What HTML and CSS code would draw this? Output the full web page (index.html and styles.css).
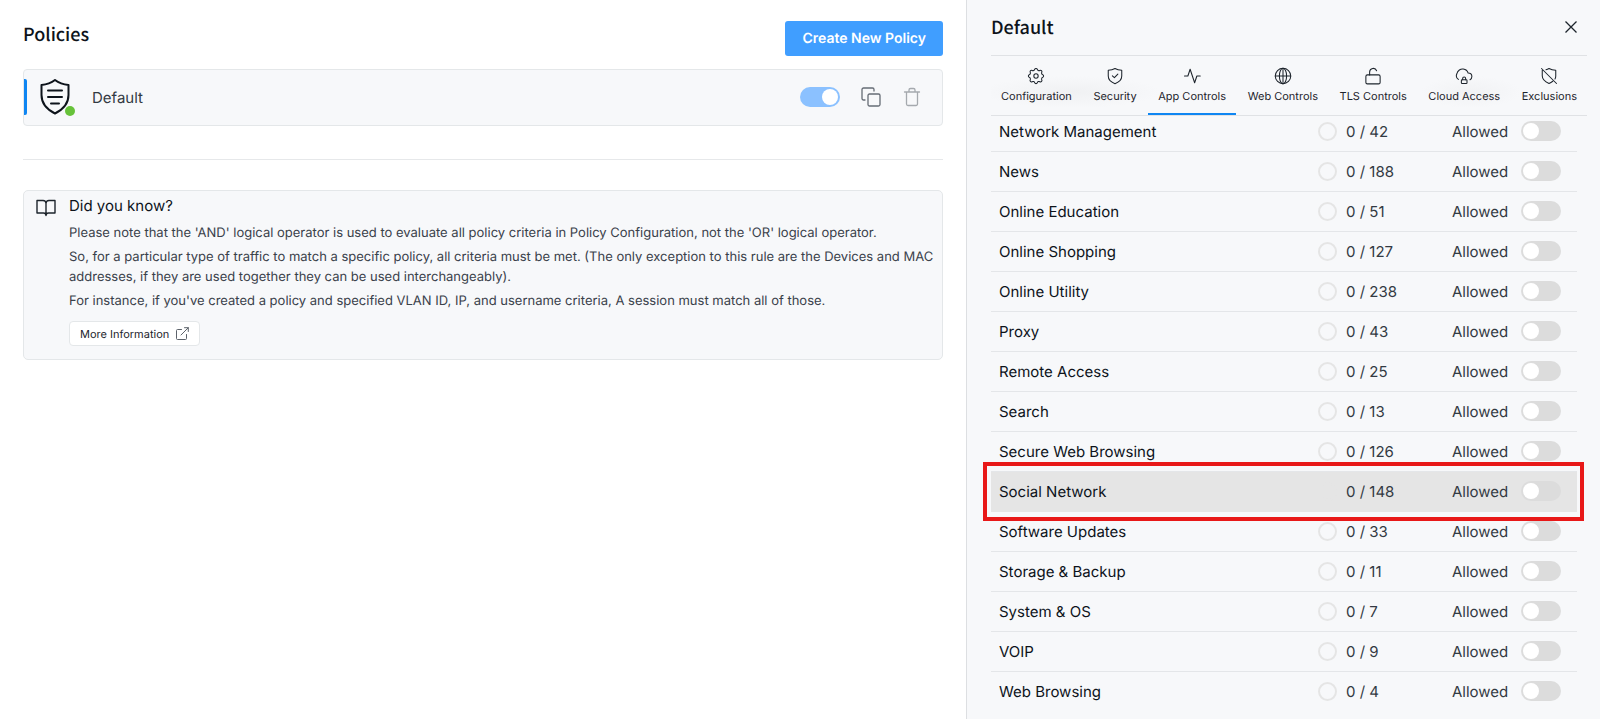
FILE: index.html
```html
<!DOCTYPE html>
<html lang="en">
<head>
<meta charset="utf-8">
<title>Policies</title>
<link rel="stylesheet" href="styles.css">
</head>
<body>
<main class="policies">
  <header class="policies-head">
    <h1 class="title">Policies</h1>
    <button class="create" type="button">Create New Policy</button>
  </header>

  <section class="policy">
    <span class="policy-mark"></span>
    <span class="policy-icon">
      <svg width="36" height="36" viewBox="0 0 36 36" fill="none" stroke="#0d131b" stroke-width="2" stroke-linejoin="round" stroke-linecap="round"><path d="M18 1C14 4 9 5.500 4.500 6V16c0 9 5.500 14.500 13.500 18.500C26 30.500 31.500 25 31.500 16V6C27 5.500 22 4 18 1z"/><path d="M11 11.500h14M11 18h14M14 24.500h8"/></svg>
      <span class="status"></span>
    </span>
    <span class="policy-name">Default</span>
    <input class="toggle toggle-on" type="checkbox" checked aria-label="Enable Default policy">
    <button class="icon-btn" type="button" aria-label="Duplicate"><svg width="20" height="20" viewBox="0 0 20 20" fill="none" stroke="#666c75" stroke-width="1.300" stroke-linecap="round"><rect x="7" y="7" width="12" height="12" rx="1.500"/><path d="M4 13H2.500A1.500 1.500 0 0 1 1 11.500v-9A1.500 1.500 0 0 1 2.500 1h9A1.500 1.500 0 0 1 13 2.500V4"/></svg></button>
    <button class="icon-btn" type="button" aria-label="Delete"><svg width="20" height="20" viewBox="0 0 20 20" fill="none" stroke="#a5a9ae" stroke-width="1.300" stroke-linecap="round"><path d="M2.500 5h15M4.500 5v12a1.500 1.500 0 0 0 1.500 1.500h8a1.500 1.500 0 0 0 1.500-1.500V5M7 5V3a1.500 1.500 0 0 1 1.500-1.500h3A1.500 1.500 0 0 1 13 3v2"/></svg></button>
  </section>

  <hr class="divider">

  <section class="info">
    <svg class="info-icon" width="20" height="18" viewBox="0 0 20 18" fill="none" stroke="#1d242c" stroke-width="1.400" stroke-linejoin="round"><path d="M10 4.500A3 3 0 0 0 7 1.500H1v12.500h6.500A2.500 2.500 0 0 1 10 16.500zM10 4.500a3 3 0 0 1 3-3h6v12.500h-6.500a2.500 2.500 0 0 0-2.500 2.500"/></svg>
    <div class="info-body">
      <h2 class="info-title">Did you know?</h2>
      <p>Please note that the 'AND' logical operator is used to evaluate all policy criteria in Policy Configuration, not the 'OR' logical operator.</p>
      <p>So, for a particular type of traffic to match a specific policy, all criteria must be met. (The only exception to this rule are the Devices and MAC addresses, if they are used together they can be used interchangeably).</p>
      <p>For instance, if you've created a policy and specified VLAN ID, IP, and username criteria, A session must match all of those.</p>
      <a class="more" href="#">More Information
        <svg width="13" height="13" viewBox="0 0 13 13" fill="none" stroke="#5d636b" stroke-linecap="round" stroke-linejoin="round"><path d="M5.500 2.500h-4a1 1 0 0 0-1 1v8a1 1 0 0 0 1 1h8a1 1 0 0 0 1-1v-4M5 8L12.300.7M8.500.7h3.800v3.800"/></svg>
      </a>
    </div>
  </section>
</main>

<aside class="panel">
  <header class="panel-head">
    <h2 class="title">Default</h2>
    <button class="icon-btn" type="button" aria-label="Close"><svg width="12" height="12" viewBox="0 0 12 12" stroke="#1d242c" stroke-width="1.300"><path d="M.5.5l11 11M11.500.5l-11 11"/></svg></button>
  </header>
  <nav class="tabs">
    <button class="tab" type="button"><svg width="18" height="18" viewBox="0 0 24 24"><circle cx="12" cy="12" r="2.900"/><path d="M10.200 3.200a1.900 1.900 0 0 1 3.600 0 2.300 2.300 0 0 0 3.300 1.400 1.900 1.900 0 0 1 2.600 2.500 2.300 2.300 0 0 0 1.300 3.200 1.900 1.900 0 0 1 0 3.500 2.300 2.300 0 0 0-1.300 3.200 1.900 1.900 0 0 1-2.600 2.600 2.300 2.300 0 0 0-3.300 1.300 1.900 1.900 0 0 1-3.600 0 2.300 2.300 0 0 0-3.300-1.300A1.900 1.900 0 0 1 4.300 17 2.300 2.300 0 0 0 3 13.800a1.900 1.900 0 0 1 0-3.500 2.300 2.300 0 0 0 1.300-3.200 1.900 1.900 0 0 1 2.600-2.500 2.300 2.300 0 0 0 3.300-1.400z"/></svg>Configuration</button>
    <button class="tab" type="button"><svg width="18" height="18" viewBox="0 0 24 24"><path d="M12 2c2.600 1.600 5.600 2.300 9 2.300V12c0 5-4 8.300-9 10.200C7 20.300 3 17 3 12V4.300c3.400 0 6.400-.7 9-2.300z"/><path d="M8.500 11.800l2.700 2.500 4.600-4.800"/></svg>Security</button>
    <button class="tab tab-active" type="button"><svg width="18" height="18" viewBox="0 0 24 24"><path d="M2 12h4.500L9.500 3l6 18 3-9H23"/></svg>App Controls</button>
    <button class="tab" type="button"><svg width="18" height="18" viewBox="0 0 24 24"><circle cx="12" cy="12" r="10.300"/><ellipse cx="12" cy="12" rx="4.800" ry="10.300"/><path d="M1.700 12h20.600M12 1.700v20.600"/></svg>Web Controls</button>
    <button class="tab" type="button"><svg width="18" height="18" viewBox="0 0 24 24"><rect x="2.500" y="10.500" width="19" height="12" rx="2"/><path d="M7.500 10.500V6.500a4.800 4.800 0 0 1 9.300-1.500"/></svg>TLS Controls</button>
    <button class="tab" type="button"><svg width="18" height="18" viewBox="0 0 24 24"><path d="M4.500 16.500A6 6 0 0 1 2.500 9C3.500 4.500 7.500 2.300 11 2.800c3.500.5 5.700 2.500 6.500 5.200 3 0 5 1.800 5 4.700 0 2-1 3.500-2.500 4.300"/><rect x="8.500" y="17" width="7.500" height="5" rx="1"/><path d="M10.200 17v-1.700a2 2 0 0 1 4 0V17"/></svg>Cloud Access</button>
    <button class="tab" type="button"><svg width="18" height="18" viewBox="0 0 24 24"><path d="M8 3.700c1.500-.4 2.800-1 4-1.700 2.600 1.600 5.600 2.300 9 2.300V12c0 1.500-.3 2.800-1 4M17 19a22 22 0 0 1-5 3c-5-2-9-5.200-9-10.200V4.500M2 2l20 20"/></svg>Exclusions</button>
  </nav>
  <ul class="apps">
    <li class="app"><label class="app-name" for="a1">Network Management</label><span class="ring"></span><span class="count">0 / 42</span><span class="state">Allowed</span><input class="toggle" type="checkbox" id="a1"></li>
    <li class="app"><label class="app-name" for="a2">News</label><span class="ring"></span><span class="count">0 / 188</span><span class="state">Allowed</span><input class="toggle" type="checkbox" id="a2"></li>
    <li class="app"><label class="app-name" for="a3">Online Education</label><span class="ring"></span><span class="count">0 / 51</span><span class="state">Allowed</span><input class="toggle" type="checkbox" id="a3"></li>
    <li class="app"><label class="app-name" for="a4">Online Shopping</label><span class="ring"></span><span class="count">0 / 127</span><span class="state">Allowed</span><input class="toggle" type="checkbox" id="a4"></li>
    <li class="app"><label class="app-name" for="a5">Online Utility</label><span class="ring"></span><span class="count">0 / 238</span><span class="state">Allowed</span><input class="toggle" type="checkbox" id="a5"></li>
    <li class="app"><label class="app-name" for="a6">Proxy</label><span class="ring"></span><span class="count">0 / 43</span><span class="state">Allowed</span><input class="toggle" type="checkbox" id="a6"></li>
    <li class="app"><label class="app-name" for="a7">Remote Access</label><span class="ring"></span><span class="count">0 / 25</span><span class="state">Allowed</span><input class="toggle" type="checkbox" id="a7"></li>
    <li class="app"><label class="app-name" for="a8">Search</label><span class="ring"></span><span class="count">0 / 13</span><span class="state">Allowed</span><input class="toggle" type="checkbox" id="a8"></li>
    <li class="app"><label class="app-name" for="a9">Secure Web Browsing</label><span class="ring"></span><span class="count">0 / 126</span><span class="state">Allowed</span><input class="toggle" type="checkbox" id="a9"></li>
    <li class="app app-marked"><label class="app-name" for="a10">Social Network</label><span class="ring"></span><span class="count">0 / 148</span><span class="state">Allowed</span><input class="toggle" type="checkbox" id="a10"></li>
    <li class="app"><label class="app-name" for="a11">Software Updates</label><span class="ring"></span><span class="count">0 / 33</span><span class="state">Allowed</span><input class="toggle" type="checkbox" id="a11"></li>
    <li class="app"><label class="app-name" for="a12">Storage &amp; Backup</label><span class="ring"></span><span class="count">0 / 11</span><span class="state">Allowed</span><input class="toggle" type="checkbox" id="a12"></li>
    <li class="app"><label class="app-name" for="a13">System &amp; OS</label><span class="ring"></span><span class="count">0 / 7</span><span class="state">Allowed</span><input class="toggle" type="checkbox" id="a13"></li>
    <li class="app"><label class="app-name" for="a14">VOIP</label><span class="ring"></span><span class="count">0 / 9</span><span class="state">Allowed</span><input class="toggle" type="checkbox" id="a14"></li>
    <li class="app"><label class="app-name" for="a15">Web Browsing</label><span class="ring"></span><span class="count">0 / 4</span><span class="state">Allowed</span><input class="toggle" type="checkbox" id="a15"></li>
  </ul>
</aside>
</body>
</html>
```

FILE: styles.css
```css
* { box-sizing: border-box; }

body {
  margin: 0;
  min-height: 100vh;
  display: grid;
  grid-template-columns: minmax(0, 1fr) 634px;
  background: #fff;
  color: #1d242c;
  font-family: Inter, "Liberation Sans", sans-serif;
  font-size: 15px;
  text-rendering: geometricPrecision;
}

h1, h2, p, ul { margin: 0; padding: 0; }
button { font-family: inherit; text-rendering: inherit; cursor: pointer; }

.title {
  color: #0d131b;
  font-family: "Noto Sans CJK SC", "Noto Sans", sans-serif;
  font-size: 18px;
  font-weight: 500;
  line-height: 26px;
}

.icon-btn {
  display: flex;
  padding: 0;
  border: 0;
  background: none;
}

/* Policy list */

.policies { padding: 21px 23px; }

.policies-head {
  display: flex;
  justify-content: space-between;
  align-items: flex-start;
  margin-bottom: 13px;
}

.create {
  height: 35px;
  padding: 0 17px;
  border: 0;
  border-radius: 3px;
  background: #409eff;
  color: #fff;
  font-size: 14px;
  font-weight: 600;
}

.policy {
  display: flex;
  align-items: center;
  height: 57px;
  padding: 0 20px 1px 0;
  border: 1px solid #e4e7e9;
  border-radius: 4px;
  background: #f7f8fa;
}

.policy-mark {
  width: 3px;
  height: 36px;
  border-radius: 0 2px 2px 0;
  background: #0f86f2;
}

.policy-icon {
  position: relative;
  display: flex;
  margin: 0 19px 0 10px;
}

.status {
  position: absolute;
  right: -2px;
  bottom: -1px;
  width: 10px;
  height: 10px;
  border-radius: 50%;
  background: #67c23a;
}

.policy-name { flex: 1; color: #333a43; }
.policy .icon-btn { margin-left: 21px; }

.divider {
  margin: 33px 0 30px;
  border: 0;
  border-top: 1px solid #e6e8ea;
}

.info {
  display: flex;
  gap: 13px;
  padding: 5px 4px 13px 12px;
  border: 1px solid #e4e7e9;
  border-radius: 5px;
  background: #f7f8fa;
}

.info-icon { flex: none; margin-top: 3px; }
.info-body { font-size: 13px; line-height: 20px; color: #3a414a; }
.info-body p { margin-bottom: 4px; }

.info-title {
  margin-bottom: 7px;
  color: #0d131b;
  font-size: 15px;
  font-weight: 400;
  line-height: 20px;
}

.more {
  display: inline-flex;
  align-items: center;
  gap: 7px;
  height: 25px;
  margin-top: 6px;
  padding: 0 10px;
  border: 1px solid #e4e7e9;
  border-radius: 4px;
  background: #fff;
  color: #1d242c;
  font-size: 11px;
  text-decoration: none;
}

/* Policy detail */

.panel {
  padding-left: 24px;
  padding-right: 13px;
  border-left: 1px solid #dddfe2;
  background: #f7f8fa;
}

.panel-head {
  display: flex;
  justify-content: space-between;
  align-items: center;
  height: 55px;
  padding: 0 10px 2px 0;
}

.tabs {
  position: relative;
  z-index: 1;
  display: flex;
  justify-content: space-between;
  height: 61px;
  border-top: 1px solid #e0e2e5;
  border-bottom: 1px solid #e0e2e5;
  background:
    radial-gradient(90px 16px at 80px 36px, #f0f1f3, transparent),
    radial-gradient(50px 16px at 480px 36px, #f1f2f4, transparent),
    #f7f8fa;
}

.tab {
  display: flex;
  flex-direction: column;
  align-items: center;
  gap: 4px;
  padding: 11px 10px 0;
  border: 0;
  border-bottom: 2px solid transparent;
  background: none;
  color: #1d242c;
  font-size: 11px;
  line-height: 14px;
}

.tab svg {
  fill: none;
  stroke: #1d242c;
  stroke-width: 1.4;
  stroke-linecap: round;
  stroke-linejoin: round;
}

.tab-active { border-bottom-color: #0f86f2; }

/* The first row sits partly under the tab bar. */
.apps {
  margin: -4px 10px 0 0;
  list-style: none;
}

.app {
  display: grid;
  grid-template-columns: 1fr 19px 97px 60px 40px;
  align-items: center;
  column-gap: 9px;
  height: 40px;
  padding: 0 16px 1px 8px;
  border-bottom: 1px solid #e4e6e9;
}

.app:last-child { border-bottom-color: transparent; }
.app-name { color: #0d131b; }
.count { color: #333a43; }
.state { color: #333a43; }

.ring {
  width: 19px;
  height: 19px;
  border: 2px solid #e5e5e5;
  border-radius: 50%;
}

.app-marked {
  position: relative;
  border-bottom-color: #e5e5e5;
  background: #e5e5e5;
}

.app-marked::after {
  content: "";
  position: absolute;
  inset: -10px -7px -10px -8px;
  border: 4px solid #e81818;
  pointer-events: none;
}

.toggle {
  appearance: none;
  flex: none;
  width: 40px;
  height: 20px;
  margin: 0;
  padding: 2px;
  border-radius: 10px;
  background: #dcdcdc;
}

.toggle::before {
  content: "";
  display: block;
  width: 16px;
  height: 16px;
  border-radius: 50%;
  background: #fff;
}

.toggle-on { background: #8bc1ff; }
.toggle-on::before { margin-left: auto; }
```
